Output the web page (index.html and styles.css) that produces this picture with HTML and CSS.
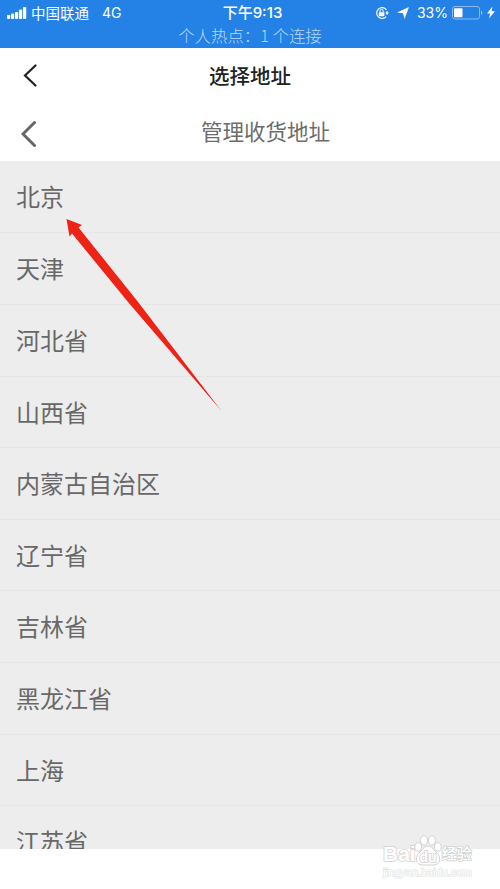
FILE: index.html
```html
<!DOCTYPE html>
<html lang="zh-CN">
<head>
    <meta charset="UTF-8">
    <meta name="viewport" content="width=device-width, initial-scale=1.0">
    <title>选择地址</title>
    <link rel="stylesheet" href="styles.css">
</head>
<body>

<header class="status-bar">
    <div class="status-row">
        <div class="status-left">
            <svg class="signal" width="20" height="12" viewBox="0 0 20 12">
                <rect x="0" y="8" width="3.2" height="4" rx="0.8"/>
                <rect x="4" y="6.5" width="3.2" height="5.5" rx="0.8"/>
                <rect x="8" y="5" width="3.2" height="7" rx="0.8"/>
                <rect x="12" y="2.5" width="3.2" height="9.5" rx="0.8"/>
                <rect x="16" y="0" width="3.2" height="12" rx="0.8"/>
            </svg>
            <span class="carrier">中国联通</span>
            <span class="network">4G</span>
        </div>
        <div class="clock">下午9:13</div>
        <div class="status-right">
            <svg class="lock" width="14" height="14" viewBox="0 0 14 14">
                <path d="M11.4 3.8A5.4 5.4 0 1 0 11.2 10.6M12 5v2.500" fill="none" stroke="#fff" stroke-width="1.2"/>
                <path d="M10.200 6.4h3.800l-1.900 2.600z"/>
                <rect x="3.8" y="6.2" width="5.6" height="4" rx="0.6"/>
                <path d="M5 6.4V5a1.6 1.6 0 0 1 3.2 0v1.4" fill="none" stroke="#fff" stroke-width="1"/>
            </svg>
            <svg class="location" width="12" height="12" viewBox="0 0 12 12">
                <path d="M12 0L7.5 12L6 6.200L0 5.5z"/>
            </svg>
            <span class="percent">33%</span>
            <svg class="battery" width="31" height="14" viewBox="0 0 31 14">
                <rect x="0.5" y="0.5" width="27" height="12.5" rx="2.5" fill="none" stroke="#8abcf3"/>
                <rect x="2" y="2.2" width="8.5" height="9" rx="1"/>
                <path d="M29 4.5c2 1 2 3.5 0 4.5z" fill="#8abcf3"/>
            </svg>
            <svg class="bolt" width="8" height="13" viewBox="0 0 8 12">
                <path d="M5.500 0L0 7h3.2L2 12L8 4.8H4.6z"/>
            </svg>
        </div>
    </div>
    <div class="hotspot">个人热点：1 个连接</div>
</header>

<nav class="title-bar">
    <svg class="back" width="14" height="24" viewBox="0 0 14 24">
        <path d="M12.5 1.5L2 11.5L12.5 21.5"/>
    </svg>
    <h1>选择地址</h1>
</nav>

<nav class="title-bar sub-bar">
    <svg class="back" width="15" height="28" viewBox="0 0 15 28">
        <path d="M13.5 2.5L2 14L13.5 25.5"/>
    </svg>
    <h2>管理收货地址</h2>
</nav>

<ul class="province-list">
    <li>北京</li>
    <li>天津</li>
    <li>河北省</li>
    <li>山西省</li>
    <li>内蒙古自治区</li>
    <li>辽宁省</li>
    <li>吉林省</li>
    <li>黑龙江省</li>
    <li>上海</li>
    <li>江苏省</li>
</ul>

<svg class="arrow" width="160" height="198" viewBox="0 0 160 198">
    <path d="M1.500 1L17 7L13.500 9.500L71.500 82L156.500 193L63 84L7 15.500L4.500 18.500z"/>
</svg>

<div class="watermark">
    <div class="brand">
        <span class="brand-en">Bai</span>
        <svg class="paw" width="28" height="31" viewBox="0 0 28 31">
            <ellipse cx="4.2" cy="12" rx="3.4" ry="4.2"/>
            <ellipse cx="10" cy="5.4" rx="3.500" ry="4.700"/>
            <ellipse cx="17.8" cy="5.4" rx="3.500" ry="4.700"/>
            <ellipse cx="23.8" cy="12" rx="3.4" ry="4.2"/>
            <path d="M14 11c4 0 5.500 4 9 7c5 5 2.500 12-3 12h-12c-5.500 0-8-7-3-12C8.500 15 10 11 14 11z"/>
            <text x="14" y="26.500" text-anchor="middle">du</text>
        </svg>
        <span class="brand-cn">经验</span>
    </div>
    <div class="site">jingyan.baidu.com</div>
</div>

</body>
</html>
```
FILE: styles.css
```css
body {
    margin: 0;
    height: 889px;
    background-color: #fff;
    font-family: 'Noto Sans CJK SC', sans-serif;
    overflow: hidden;
}
.status-bar {
    height: 48px;
    background-color: #2481e6;
    color: #fff;
}
.status-row {
    display: grid;
    grid-template-columns: 1fr auto 1fr;
    align-items: center;
    height: 25px;
    padding: 0 5px 0 7px;
    font-size: 14px;
    line-height: 25px;
}
.status-row svg {
    fill: #fff;
}
.status-left, .status-right {
    display: flex;
    align-items: center;
}
.status-right {
    justify-content: flex-end;
}
.carrier {
    margin-left: 4px;
    font-size: 14.5px;
}
.network {
    margin-left: 13px;
    font-family: Inter, sans-serif;
    font-size: 14px;
}
.clock {
    margin-left: 3px;
    font-family: Inter, 'Noto Sans CJK SC', sans-serif;
    font-weight: 500;
    font-size: 15px;
}
.location {
    margin-left: 8px;
}
.percent {
    margin-left: 8px;
    font-family: Inter, sans-serif;
    font-size: 14px;
}
.battery {
    margin-left: 4px;
}
.bolt {
    margin-left: 4px;
}
.hotspot {
    height: 22px;
    line-height: 20px;
    font-size: 16.4px;
    font-weight: 300;
    text-align: center;
    color: #b9dafb;
}
.title-bar {
    display: grid;
    grid-template-columns: 40px 1fr 40px;
    align-items: center;
    height: 55px;
}
.back {
    margin-left: 23px;
    fill: none;
    stroke: #222;
    stroke-width: 2.2;
    stroke-linecap: round;
}
.title-bar h1, .title-bar h2 {
    margin: 0;
    padding-bottom: 2px;
    text-align: center;
}
.title-bar h1 {
    font-size: 20.5px;
    font-weight: 500;
    color: #222;
}
.sub-bar {
    height: 58px;
}
.sub-bar .back {
    margin: 3px 0 0 21px;
    stroke: #666;
    stroke-width: 3;
}
.title-bar h2 {
    padding-left: 31px;
    padding-bottom: 3px;
    font-size: 21.5px;
    font-weight: 400;
    color: #6c6c6c;
}
.province-list {
    list-style: none;
    height: 688px;
    margin: 0;
    padding: 0;
    overflow: hidden;
    background-color: #ededed;
}
.province-list li {
    box-sizing: border-box;
    height: 71.6px;
    padding-left: 16px;
    border-bottom: 1px solid #e4e6e6;
    font-size: 24px;
    line-height: 69.5px;
    font-weight: 400;
    color: #686868;
}
.province-list li:first-child {
    height: 72.4px;
}
.arrow {
    position: absolute;
    left: 65px;
    top: 218px;
    fill: #ee2215;
}
.watermark {
    position: absolute;
    left: 383px;
    top: 834px;
    width: 92px;
    color: #fff;
    font-family: 'Liberation Sans', 'Noto Sans CJK SC', sans-serif;
}
.brand {
    display: flex;
    align-items: flex-end;
    height: 32px;
    font-size: 20px;
    line-height: 24px;
    font-weight: bold;
}
.brand-en, .brand-cn, .site {
    paint-order: stroke fill;
    -webkit-text-stroke: 1.6px #d2d2d2;
}
.brand-en {
    font-size: 21px;
}
.paw {
    flex: none;
    margin-left: -2px;
    fill: #fff;
    stroke: #d2d2d2;
    stroke-width: 1;
}
.paw text {
    font-size: 14px;
    font-weight: bold;
    stroke-width: 1.6;
    paint-order: stroke fill;
}
.brand-cn {
    font-size: 15px;
    font-weight: 500;
    white-space: nowrap;
}
.site {
    font-size: 11px;
    line-height: 13px;
    white-space: nowrap;
    -webkit-text-stroke: 1.2px #e2e2e2;
}
```
